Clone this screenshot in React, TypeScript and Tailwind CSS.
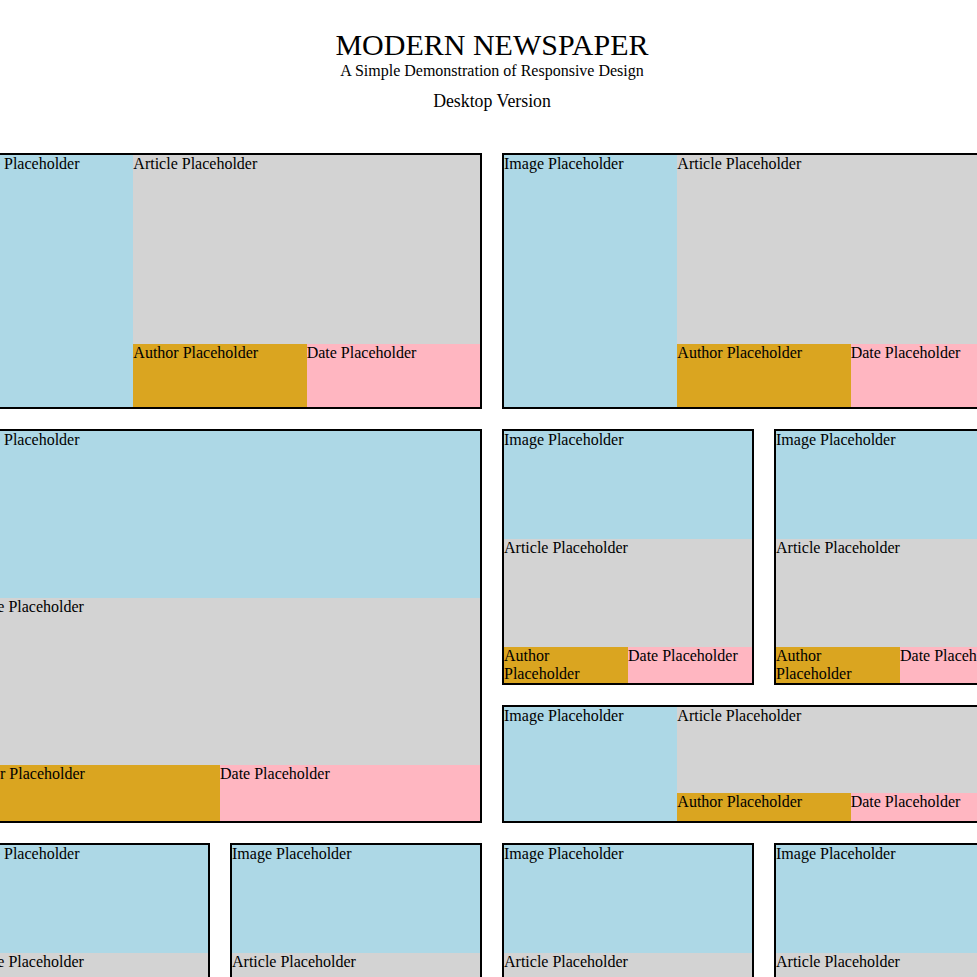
import React from "react";

type CardProps = { className?: string };

const HorizontalCard: React.FC<CardProps> = ({ className = "" }) => (
  <div
    className={`grid grid-cols-3 grid-rows-[3fr_1fr] border-2 border-black ${className}`}
  >
    <div className="row-span-2 min-w-0 bg-[#add8e6]">Image Placeholder</div>
    <div className="col-span-2 min-w-0 bg-[#d3d3d3]">Article Placeholder</div>
    <div className="min-w-0 bg-[#daa520]">Author Placeholder</div>
    <div className="min-w-0 bg-[#ffb6c1]">Date Placeholder</div>
  </div>
);

const VerticalCard: React.FC<CardProps> = ({ className = "" }) => (
  <div
    className={`grid grid-cols-2 grid-rows-[3fr_3fr_1fr] border-2 border-black ${className}`}
  >
    <div className="col-span-2 min-w-0 bg-[#add8e6]">Image Placeholder</div>
    <div className="col-span-2 min-w-0 bg-[#d3d3d3]">Article Placeholder</div>
    <div className="min-w-0 bg-[#daa520]">Author Placeholder</div>
    <div className="min-w-0 bg-[#ffb6c1]">Date Placeholder</div>
  </div>
);

export default function App() {
  return (
    <div className="h-screen overflow-hidden bg-white pl-[7px] font-['Liberation_Serif',serif] text-base leading-[18px] text-black">
      <header className="pt-[28px] text-center">
        <h1 className="text-[30px] leading-[34px] font-normal">
          MODERN NEWSPAPER
        </h1>
        <p className="text-base leading-[18px]">
          A Simple Demonstration of Responsive Design
        </p>
        <p className="mt-[11px] text-[17.8px] leading-[20px]">Desktop Version</p>
      </header>

      <div className="mt-[42px] flex justify-center">
        <main className="grid w-[1068px] shrink-0 grid-cols-[repeat(4,252px)] grid-rows-[256px_256px_118px_256px] gap-5">
          <HorizontalCard className="col-span-2" />
          <HorizontalCard className="col-span-2" />

          <VerticalCard className="col-span-2 row-span-2" />
          <VerticalCard />
          <VerticalCard />
          <HorizontalCard className="col-span-2" />

          <VerticalCard />
          <VerticalCard />
          <VerticalCard />
          <VerticalCard />
        </main>
      </div>
    </div>
  );
}
